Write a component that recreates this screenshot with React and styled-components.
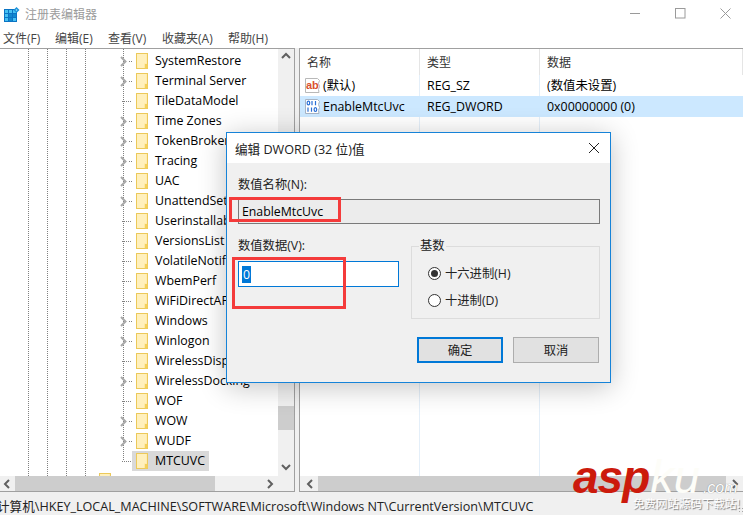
import React from 'react'
import styled, { createGlobalStyle } from 'styled-components'

const UI_FONT = '"Open Sans", "Noto Sans CJK SC", sans-serif'

const treeItems = [
  { name: 'SystemRestore', hasChildren: true },
  { name: 'Terminal Server', hasChildren: true },
  { name: 'TileDataModel' },
  { name: 'Time Zones', hasChildren: true },
  { name: 'TokenBroker', hasChildren: true },
  { name: 'Tracing', hasChildren: true },
  { name: 'UAC', hasChildren: true },
  { name: 'UnattendSettings', hasChildren: true },
  { name: 'Userinstallable' },
  { name: 'VersionsList' },
  { name: 'VolatileNotifications' },
  { name: 'WbemPerf' },
  { name: 'WiFiDirectAPI' },
  { name: 'Windows', hasChildren: true },
  { name: 'Winlogon', hasChildren: true },
  { name: 'WirelessDisplay' },
  { name: 'WirelessDocking', hasChildren: true },
  { name: 'WOF' },
  { name: 'WOW', hasChildren: true },
  { name: 'WUDF', hasChildren: true },
  { name: 'MTCUVC', selected: true },
]

const menuItems = [
  { label: '文件(F)', width: 52 },
  { label: '编辑(E)', width: 53 },
  { label: '查看(V)', width: 54 },
  { label: '收藏夹(A)', width: 66 },
  { label: '帮助(H)', width: 50 },
]

export default function App() {
  return (
    <>
      <GlobalStyle />
      <Window>
        <TitleBar>
          <AppIcon />
          <TitleText>注册表编辑器</TitleText>
          <WindowControls>
            <svg width="11" height="11" viewBox="0 0 11 11"><path d="M0 5.5h10" stroke="#9a9a9a" /></svg>
            <svg width="11" height="11" viewBox="0 0 11 11"><rect x=".5" y=".5" width="9.5" height="9.5" fill="none" stroke="#9a9a9a" /></svg>
            <svg width="11" height="11" viewBox="0 0 11 11"><path d="M.5.5l10 10M10.5.5l-10 10" stroke="#9a9a9a" /></svg>
          </WindowControls>
        </TitleBar>

        <MenuBar>
          {menuItems.map((item) => (
            <MenuItem key={item.label} $width={item.width}>{item.label}</MenuItem>
          ))}
        </MenuBar>

        <Panes>
          <TreePane>
            <TreeMain>
              <TreeList>
                {treeItems.map((item) => (
                  <TreeRow key={item.name}>
                    <Connector $leaf={!item.hasChildren}>
                      {item.hasChildren && <TreeChevron />}
                    </Connector>
                    <TreeLabel $selected={item.selected}>
                      <Folder />
                      <TreeText>{item.name}</TreeText>
                    </TreeLabel>
                  </TreeRow>
                ))}
                <TreeRow $indent={83}>
                  <Connector />
                  <TreeLabel><Folder /></TreeLabel>
                </TreeRow>
              </TreeList>
              <VScrollBar>
                <Arrow dir="up" />
                <VTrack><VThumb /></VTrack>
                <Arrow dir="down" />
              </VScrollBar>
            </TreeMain>
            <HScrollBar>
              <Arrow dir="left" />
              <HTrack><HThumb $width={200} /></HTrack>
              <Arrow dir="right" />
              <ScrollCorner />
            </HScrollBar>
          </TreePane>

          <ListPane>
            <ListHeader>
              <HeaderCell>名称</HeaderCell>
              <HeaderCell>类型</HeaderCell>
              <HeaderCell>数据</HeaderCell>
            </ListHeader>
            <ListBody>
              <ListRow>
                <NameCell><StringIcon />(默认)</NameCell>
                <ListCell>REG_SZ</ListCell>
                <ListCell>(数值未设置)</ListCell>
              </ListRow>
              <ListRow $selected>
                <NameCell><DwordIcon />EnableMtcUvc</NameCell>
                <ListCell>REG_DWORD</ListCell>
                <ListCell>0x00000000 (0)</ListCell>
              </ListRow>
            </ListBody>
            <HScrollBar $lead={3}>
              <Arrow dir="left" />
              <HTrack><HThumb $width={408} /></HTrack>
              <Arrow dir="right" />
            </HScrollBar>
          </ListPane>
        </Panes>

        <StatusBar>
          计算机\HKEY_LOCAL_MACHINE\SOFTWARE\Microsoft\Windows NT\CurrentVersion\MTCUVC
          <ResizeGrip />
        </StatusBar>

        <Dialog>
          <DialogTitleBar>
            编辑 DWORD (32 位)值
            <svg width="12" height="12" viewBox="0 0 12 12"><path d="M1 1l10 10M11 1L1 11" stroke="#222" /></svg>
          </DialogTitleBar>
          <DialogBody>
            <FieldLabel>数值名称(N):</FieldLabel>
            <NameField>EnableMtcUvc</NameField>
            <ValueGrid>
              <div>
                <FieldLabel>数值数据(V):</FieldLabel>
                <ValueField><SelectedText>0</SelectedText></ValueField>
              </div>
              <BaseGroup>
                <BaseLegend>基数</BaseLegend>
                <RadioRow><Radio $checked />十六进制(H)</RadioRow>
                <RadioRow><Radio />十进制(D)</RadioRow>
              </BaseGroup>
            </ValueGrid>
            <ButtonRow>
              <DialogButton $primary>确定</DialogButton>
              <DialogButton>取消</DialogButton>
            </ButtonRow>
          </DialogBody>
        </Dialog>

        <NameCallout />
        <ValueCallout />

        <Watermark>
          <MarkAsp>asp</MarkAsp>
          <MarkKu>ku</MarkKu>
          <MarkCom>.com</MarkCom>
          <MarkTagline>免费网站源码下载站!</MarkTagline>
        </Watermark>
      </Window>
    </>
  )
}

function AppIcon() {
  const cells = [0, 1, 2, 3, 4, 5, 6, 7, 8]
  const dark = [4, 5, 7]
  return (
    <AppIconSvg width="16" height="16" viewBox="0 0 16 16">
      <rect x="0" y="2" width="13" height="13" fill="#0a74c4" />
      {cells.map((c) => (
        <rect
          key={c}
          x={1 + (c % 3) * 4}
          y={3 + Math.floor(c / 3) * 4}
          width="3"
          height="3"
          fill={dark.includes(c) ? '#1188d0' : '#45c0f2'}
        />
      ))}
      <path d="M12.5 0l3 3-3 3-3-3z" fill="#1b92da" />
      <path d="M12.5 2l1 1-1 1-1-1z" fill="#9adcf8" />
    </AppIconSvg>
  )
}

function Folder() {
  return (
    <FolderSvg width="12" height="16" viewBox="0 0 12 16">
      <rect x=".5" y=".5" width="11" height="15" fill="#fee9a3" stroke="#ecc95a" />
      <path d="M1 1h9.5v9.5H8V15H1z" fill="#fff0bd" />
      <path d="M9 11h2.5v4.5H9z" fill="#f4d05c" />
    </FolderSvg>
  )
}

function TreeChevron() {
  return (
    <ChevronSvg width="7" height="11" viewBox="0 0 7 11">
      <path d="M1 1l4.5 4.5L1 10" fill="none" stroke="#a8a8a8" strokeWidth="2" />
    </ChevronSvg>
  )
}

function Arrow({ dir }) {
  const paths = {
    up: 'M1 6l4-4 4 4',
    down: 'M1 2l4 4 4-4',
    left: 'M6 1L2 5l4 4',
    right: 'M2 1l4 4-4 4',
  }
  return (
    <ArrowBox $wide={dir === 'up' || dir === 'down'}>
      <svg width="10" height="10" viewBox="0 0 10 10">
        <path d={paths[dir]} fill="none" stroke="#606060" strokeWidth="2" />
      </svg>
    </ArrowBox>
  )
}

function StringIcon() {
  return (
    <RegIconSvg width="15" height="15" viewBox="0 0 15 15">
      <path d="M.5.5h12l2 2-1 3 1 3-1 3 .5 3H.5z" fill="#fff" stroke="#b8b8b8" />
      <text x="1" y="10.5" fontFamily="Liberation Sans" fontWeight="700" fontSize="11" fill="#d9502e">ab</text>
    </RegIconSvg>
  )
}

function DwordIcon() {
  return (
    <RegIconSvg width="15" height="15" viewBox="0 0 15 15">
      <path d="M.5.5h12l2 2-1 3 1 3-1 3 .5 3H.5z" fill="#fff" stroke="#a8b4c4" />
      <g fill="none" stroke="#2a6fd6" strokeWidth="1.2">
        <ellipse cx="3.4" cy="4" rx="1.3" ry="1.9" />
        <path d="M7 2v4.2M10.5 2v4.2M3 8.5v4.2M6.5 8.5v4.2" />
        <ellipse cx="10.4" cy="10.6" rx="1.3" ry="1.9" />
      </g>
    </RegIconSvg>
  )
}

const GlobalStyle = createGlobalStyle`
  html, body {
    margin: 0;
    height: 100%;
    overflow: hidden;
    background: #fff;
  }
`

const Window = styled.div`
  position: relative;
  width: 743px;
  height: 515px;
  overflow: hidden;
  display: flex;
  flex-direction: column;
  background: #fff;
  font-family: ${UI_FONT};
  font-size: 12px;
  color: #000;
`

const TitleBar = styled.div`
  height: 28px;
  flex: none;
  display: flex;
  align-items: center;
  padding-left: 4px;
`

const AppIconSvg = styled.svg`
  flex: none;
  margin-top: 1px;
`

const TitleText = styled.span`
  margin-left: 5px;
  color: #9b9b9b;
`

const WindowControls = styled.div`
  margin-left: auto;
  margin-bottom: 2px;
  padding-right: 12px;
  display: flex;
  gap: 34px;
`

const MenuBar = styled.div`
  height: 20px;
  flex: none;
  display: flex;
  align-items: center;
  padding-left: 3px;
  color: #444;
`

const MenuItem = styled.span`
  width: ${(p) => p.$width}px;
`

const Panes = styled.div`
  flex: 1;
  min-height: 0;
  display: flex;
  gap: 4px;
  background: #f0f0f0;
  font-size: 12.4px;
`

const TreePane = styled.div`
  width: 295px;
  flex: none;
  display: flex;
  flex-direction: column;
  background: #f0f0f0;
  border-style: solid;
  border-color: #a0a0a0;
  border-width: 1px 1px 1px 0;
  box-sizing: border-box;
`

const TreeMain = styled.div`
  flex: 1;
  min-height: 0;
  display: flex;
`

const TreeList = styled.div`
  flex: 1;
  min-width: 0;
  overflow: hidden;
  padding-top: 2px;
  background-color: #fff;
  background-image:
    repeating-linear-gradient(to bottom, #808080 0 1px, transparent 1px 2px),
    repeating-linear-gradient(to bottom, #808080 0 1px, transparent 1px 2px),
    repeating-linear-gradient(to bottom, #808080 0 1px, transparent 1px 2px),
    repeating-linear-gradient(to bottom, #808080 0 1px, transparent 1px 2px),
    repeating-linear-gradient(to bottom, #808080 0 1px, transparent 1px 2px);
  background-size: 1px 100%, 1px 100%, 1px 100%, 1px 100%, 1px 412px;
  background-position: 28px 0, 47px 0, 66px 0, 85px 0, 123px 0;
  background-repeat: no-repeat;
`

const TreeRow = styled.div`
  height: 20px;
  display: flex;
  align-items: stretch;
  padding-left: ${(p) => p.$indent ?? 120}px;
  white-space: nowrap;
`

const Connector = styled.div`
  width: 12px;
  flex: none;
  position: relative;
  background-image: repeating-linear-gradient(to right, #808080 0 1px, transparent 1px 2px);
  background-size: ${(p) => (p.$leaf ? '10px' : '3px')} 1px;
  background-position: right 50%;
  background-repeat: no-repeat;
`

const ChevronSvg = styled.svg`
  display: block;
  position: absolute;
  left: 0;
  top: 5px;
`

const TreeLabel = styled.div`
  display: flex;
  align-items: center;
  gap: 7px;
  padding: 0 4px;
  background: ${(p) => (p.$selected ? '#d9d9d9' : 'transparent')};
`

const TreeText = styled.span`
  margin-bottom: 2px;
`

const FolderSvg = styled.svg`
  flex: none;
`

const VScrollBar = styled.div`
  width: 16px;
  flex: none;
  display: flex;
  flex-direction: column;
  background: #f0f0f0;
`

const VTrack = styled.div`
  flex: 1;
  display: flex;
  flex-direction: column;
  justify-content: flex-end;
  padding-bottom: 30px;
`

const VThumb = styled.div`
  height: 24px;
  background: #cdcdcd;
`

const ArrowBox = styled.div`
  width: ${(p) => (p.$wide ? 16 : 15)}px;
  height: 16px;
  flex: none;
  display: flex;
  align-items: center;
  justify-content: center;
`

const HScrollBar = styled.div`
  height: 15px;
  flex: none;
  display: flex;
  align-items: center;
  padding-left: ${(p) => p.$lead ?? 0}px;
  background: #f0f0f0;
`

const HTrack = styled.div`
  flex: 1;
  min-width: 0;
  height: 100%;
`

const HThumb = styled.div`
  height: 100%;
  width: ${(p) => p.$width}px;
  background: #cdcdcd;
`

const ScrollCorner = styled.div`
  width: 16px;
  flex: none;
`

const ListPane = styled.div`
  flex: 1;
  min-width: 0;
  display: flex;
  flex-direction: column;
  background: #fff;
  border-style: solid;
  border-color: #a0a0a0;
  border-width: 1px 0 1px 1px;
  box-sizing: border-box;
`

const COLUMNS = '120px 120px 1fr'

const ListHeader = styled.div`
  height: 26px;
  flex: none;
  display: grid;
  grid-template-columns: ${COLUMNS};
  font-size: 12px;
`

const HeaderCell = styled.div`
  display: flex;
  align-items: center;
  padding-left: 7px;
  color: #333;
  border-right: 1px solid #e5e5e5;
`

const ListBody = styled.div`
  flex: 1;
  min-height: 0;
  background-image: linear-gradient(#e4eff9, #e4eff9), linear-gradient(#e4eff9, #e4eff9);
  background-size: 1px 100%, 1px 100%;
  background-position: 119px 0, 239px 0;
  background-repeat: no-repeat;
`

const ListRow = styled.div`
  height: 21px;
  display: grid;
  grid-template-columns: ${COLUMNS};
  background: ${(p) => (p.$selected ? '#cce8ff' : 'transparent')};
`

const ListCell = styled.div`
  display: flex;
  align-items: center;
  padding-left: 7px;
  padding-bottom: 1px;
  box-sizing: border-box;
  white-space: nowrap;
`

const NameCell = styled(ListCell)`
  padding-left: 5px;
  gap: 3px;
`

const RegIconSvg = styled.svg`
  flex: none;
`

const StatusBar = styled.div`
  height: 23px;
  flex: none;
  display: flex;
  align-items: center;
  justify-content: space-between;
  margin-left: -3px;
  padding-top: 3px;
  box-sizing: border-box;
  background: #f0f0f0;
  white-space: nowrap;
  font-size: 12.6px;
  color: #222;
`

const ResizeGrip = styled.span`
  width: 5px;
  height: 5px;
  align-self: flex-end;
  margin-bottom: 3px;
  background-image: radial-gradient(#a8a8a8 1px, transparent 1px);
  background-size: 3px 3px;
`

const Dialog = styled.div`
  position: absolute;
  left: 226px;
  top: 132px;
  width: 385px;
  box-sizing: border-box;
  border: 1px solid #1683d8;
  background: #f0f0f0;
  font-size: 12.3px;
  box-shadow: 0 4px 26px rgba(0, 0, 0, 0.24);
`

const DialogTitleBar = styled.div`
  height: 30px;
  display: flex;
  align-items: center;
  justify-content: space-between;
  padding: 0 10px 0 8px;
  background: #fff;
  font-size: 12.6px;
  color: #222;
`

const DialogBody = styled.div`
  padding: 14px 10px 19px 11px;
`

const FieldLabel = styled.div`
  height: 16px;
  line-height: 16px;
  color: #222;
`

const NameField = styled.div`
  height: 25px;
  margin-top: 6px;
  box-sizing: border-box;
  display: flex;
  align-items: center;
  padding-left: 3px;
  border: 1px solid #7a7a7a;
  background: #ececec;
`

const ValueGrid = styled.div`
  display: grid;
  grid-template-columns: 161px 189px;
  gap: 12px;
  margin-top: 14px;
`

const ValueField = styled.div`
  height: 26px;
  margin-top: 7px;
  box-sizing: border-box;
  display: flex;
  align-items: center;
  padding-left: 3px;
  border: 1px solid #0078d7;
  background: #fff;
`

const SelectedText = styled.span`
  background: #0078d7;
  color: #fff;
  padding: 0 1px;
`

const BaseGroup = styled.fieldset`
  margin: 0;
  padding: 0 0 0 16px;
  height: 81px;
  box-sizing: border-box;
  border: 1px solid #dcdcdc;
  display: flex;
  flex-direction: column;
  gap: 7px;
`

const BaseLegend = styled.legend`
  margin-left: -9px;
  padding: 0 1px;
  height: 16px;
  line-height: 16px;
  color: #222;
`

const RadioRow = styled.div`
  height: 20px;
  display: flex;
  align-items: center;
  gap: 4px;
  color: #222;
  &:first-of-type {
    margin-top: 9px;
  }
`

const Radio = styled.span`
  width: 13px;
  height: 13px;
  flex: none;
  box-sizing: border-box;
  border-radius: 50%;
  border: 1px solid #333;
  background: #fff;
  display: flex;
  align-items: center;
  justify-content: center;
  &::after {
    content: '';
    width: 7px;
    height: 7px;
    border-radius: 50%;
    background: ${(p) => (p.$checked ? '#333' : 'transparent')};
  }
`

const ButtonRow = styled.div`
  display: flex;
  justify-content: flex-end;
  gap: 10px;
  margin-top: 18px;
  padding-right: 1px;
`

const DialogButton = styled.div`
  width: 86px;
  height: 26px;
  box-sizing: border-box;
  display: flex;
  align-items: center;
  justify-content: center;
  background: #e1e1e1;
  color: #222;
  border: ${(p) => (p.$primary ? '2px solid #0078d7' : '1px solid #adadad')};
`

const NameCallout = styled.div`
  position: absolute;
  left: 229px;
  top: 197px;
  width: 112px;
  height: 25px;
  box-sizing: border-box;
  border: 3px solid #f43b3b;
`

const ValueCallout = styled.div`
  position: absolute;
  left: 232px;
  top: 257px;
  width: 114px;
  height: 52px;
  box-sizing: border-box;
  border: 3px solid #f43b3b;
`

const Watermark = styled.div`
  position: absolute;
  left: 573px;
  top: 450px;
  width: 170px;
  display: flex;
  align-items: baseline;
  font-family: "Liberation Sans", sans-serif;
  font-style: italic;
  line-height: 54px;
`

const MarkAsp = styled.span`
  font-size: 46px;
  font-weight: 700;
  letter-spacing: -1px;
  color: #cc1a0c;
`

const MarkKu = styled.span`
  margin-left: 1px;
  font-size: 47px;
  color: #fdfdf8;
`

const MarkCom = styled.span`
  margin-left: 3px;
  font-size: 16px;
  line-height: 18px;
  color: #fff;
  text-shadow: 0 0 1px #777;
`

const MarkTagline = styled.span`
  position: absolute;
  left: 60px;
  top: 46px;
  font-family: "Noto Sans CJK SC", sans-serif;
  font-style: normal;
  font-size: 11.5px;
  line-height: 15px;
  white-space: nowrap;
  color: #fff;
  text-shadow: 1px 1px 1px #777;
`
